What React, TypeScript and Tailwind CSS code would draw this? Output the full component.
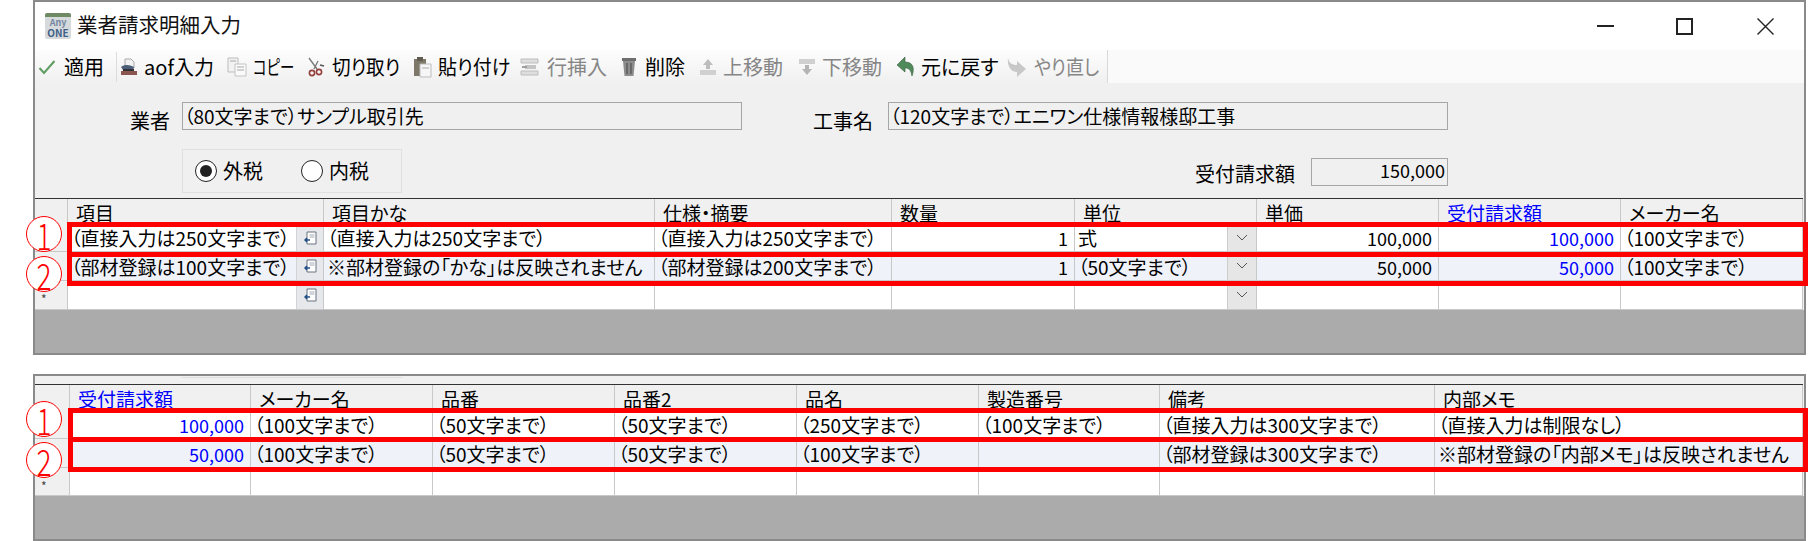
import React from 'react';

const FIRST_COLS = 'grid grid-cols-[33px_256px_331px_237px_183px_182px_182px_182px_182px] grid-rows-[25px_28px_29px_29px]';
const SECOND_COLS = 'grid grid-cols-[35px_181px_182px_182px_182px_182px_181px_275px_368px] grid-rows-[25px_29px_29px_28px]';

const Check = () => (
  <svg width="18" height="16" viewBox="0 0 18 16" fill="none"><path d="M1.5 9l4.5 5L16.5 2" stroke="#5f9c62" strokeWidth="2" /></svg>
);
const Aof = () => (
  <svg width="18" height="20" viewBox="0 0 18 20">
    <path d="M5 2h6l3 3v6H5z" fill="#f2f2f2" stroke="#a8a8a8" />
    <path d="M1 10c4-3 9-2 13 0l-1 3H3z" fill="#4d5f78" />
    <path d="M1 14h16v4H1z" fill="#8a5650" />
    <path d="M3 12h11v2H3z" fill="#2f3136" />
  </svg>
);
const Copy = () => (
  <svg width="20" height="20" viewBox="0 0 20 20">
    <path d="M1 1h10v14H1z" fill="#f2f2f2" stroke="#bcbcbc" />
    <path d="M8 7h11v12H8z" fill="#fafafa" stroke="#c4c4c4" />
    <path d="M3 4h6M10 10h7M10 13h7" stroke="#a8a8a8" />
  </svg>
);
const ScissorsIcon = () => (
  <svg width="20" height="20" viewBox="0 0 20 20" fill="none">
    <path d="M3 1l8 11M12 4l-4 8" stroke="#777" strokeWidth="1.3" />
    <path d="M14 8l4 1" stroke="#555" strokeWidth="1.3" />
    <circle cx="6" cy="16" r="2.6" stroke="#94403d" strokeWidth="1.6" />
    <circle cx="13" cy="15" r="2.6" stroke="#94403d" strokeWidth="1.6" />
  </svg>
);
const Paste = () => (
  <svg width="19" height="22" viewBox="0 0 19 22">
    <path d="M1 3h12v17H1z" fill="#7d7868" />
    <path d="M4 1h6v4H4z" fill="#5f5b4e" />
    <path d="M7 8h11v13H7z" fill="#f6f6f6" stroke="#bdbdbd" />
    <path d="M9 12h7" stroke="#aaa" />
  </svg>
);
const Insert = () => (
  <svg width="20" height="20" viewBox="0 0 20 20">
    <path d="M1 2h17v4H1zM1 14h17v4H1z" fill="#dedede" stroke="#bdbdbd" />
    <path d="M5 8h11v4H5z" fill="#c4c4c4" />
    <path d="M2 10h5" stroke="#a0a0a0" strokeWidth="2" />
  </svg>
);
const Trash = () => (
  <svg width="16" height="21" viewBox="0 0 16 21">
    <path d="M1 2h14v3H1z" fill="#6e6e6e" />
    <path d="M2 5h12l-1.5 15h-9z" fill="#8c8c8c" />
    <path d="M6 7v11M10 7v11" stroke="#5c5c5c" strokeWidth="1.5" />
  </svg>
);
const UpMove = () => (
  <svg width="18" height="18" viewBox="0 0 18 18">
    <path d="M9 1l5 6h-3v4H7V7H4z" fill="#bdbdbd" />
    <path d="M1 12h16v5H1z" fill="#d0d0d0" />
  </svg>
);
const DownMove = () => (
  <svg width="18" height="18" viewBox="0 0 18 18">
    <path d="M1 1h16v5H1z" fill="#d0d0d0" />
    <path d="M7 7h4v4h3l-5 6-5-6h3z" fill="#b4b4b4" />
  </svg>
);
const Undo = () => (
  <svg width="20" height="22" viewBox="0 0 20 22">
    <path d="M9 1L1 9l8 7v-4c4 0 6 2 7 8 3-8 1-14-7-14z" fill="#4f8a5b" stroke="#3a5f45" strokeWidth="0.6" />
  </svg>
);
const Redo = () => (
  <svg width="20" height="22" viewBox="0 0 20 22">
    <path d="M1 2c1 5 4 7 9 7V5l9 8-9 8v-5C4 16 0 10 1 2z" fill="#c8c8c8" />
  </svg>
);
const FileBtnIcon = () => (
  <svg width="13" height="14" viewBox="0 0 13 14">
    <path d="M3 1h9v12H3z" fill="#fff" stroke="#69727e" />
    <path d="M5.5 4h5M5.5 6h5" stroke="#a3aab3" />
    <path d="M1 9h5M3 7L1 9l2 2" stroke="#1f4f86" strokeWidth="1.5" fill="none" />
  </svg>
);

type ToolProps = { icon: React.ReactNode; label: string; disabled?: boolean; className: string; labelClass: string };

const Tool = ({ icon, label, disabled, className, labelClass }: ToolProps) => (
  <div className={`flex items-center shrink-0 ${className}`}>
    {icon}
    <span className={`inline-block origin-left text-[20px] whitespace-nowrap ${labelClass} ${disabled ? 'text-[#868686]' : 'text-black'}`}>{label}</span>
  </div>
);

const Radio = ({ checked, label, className }: { checked?: boolean; label: string; className: string }) => (
  <div className={`flex items-center ${className}`}>
    <div className="w-[22px] h-[22px] rounded-full border-[1.5px] border-[#222] bg-white flex items-center justify-center">
      {checked && <div className="w-[12px] h-[12px] rounded-full bg-[#222]" />}
    </div>
    <span className="ml-[6px] text-[20px]">{label}</span>
  </div>
);

const Head = ({ children, blue }: { children?: React.ReactNode; blue?: boolean }) => (
  <div className={`pt-[3px] pl-[8px] text-[19px] leading-[22px] border-r border-[#c8c8c8] bg-[#f0f0f0] whitespace-nowrap ${blue ? 'text-[#0000ff]' : 'text-black'}`}>
    {children}
  </div>
);

const Cell = ({ children, alt, right, blue, button }: { children?: React.ReactNode; alt?: boolean; right?: boolean; blue?: boolean; button?: 'file' | 'combo' }) => (
  <div className={`flex items-stretch border-r border-b border-[#c8c8c8] whitespace-nowrap ${right ? 'text-[18px]' : 'text-[19px]'} ${alt ? 'bg-[#eff2f8]' : 'bg-white'} ${blue ? 'text-[#0000ff]' : 'text-black'}`}>
    <div className={`flex-1 flex items-center min-w-0 pt-[1px] leading-[22px] ${right ? 'justify-end pr-[6px]' : 'pl-[3px]'}`}>{children}</div>
    {button === 'file' && (
      <div className="w-[27px] shrink-0 flex items-center justify-center bg-[#e6e8ec] border-l border-[#d4d4d4]"><FileBtnIcon /></div>
    )}
    {button === 'combo' && (
      <div className="w-[29px] shrink-0 flex items-center justify-center bg-[#e6e6e6] border-l border-[#cdcdcd]">
        <svg width="12" height="8" viewBox="0 0 12 8" fill="none"><path d="M1 1l5 5 5-5" stroke="#555" /></svg>
      </div>
    )}
  </div>
);

const RowHead = ({ star }: { star?: boolean }) => (
  <div className="pt-[12px] pl-[6px] bg-[#f0f0f0] border-r border-b border-[#c8c8c8] text-[12px] leading-none text-[#444]">
    {star ? '*' : ''}
  </div>
);

const RedBox = ({ className }: { className: string }) => <div className={`absolute border-[5px] border-[#ff0000] ${className}`} />;

const Circled = ({ n, className }: { n: string; className: string }) => (
  <div className={`absolute w-[36px] h-[36px] rounded-full bg-white border border-[#ff0000] flex items-center justify-center text-[#ff0000] text-[28px] leading-none font-light ${className}`}>
    <span className="inline-block scale-y-[1.3]">{n}</span>
  </div>
);

export default function App() {
  return (
    <div className="relative h-[541px] w-[1808px] overflow-hidden bg-white text-black font-['Noto_Sans_CJK_JP',sans-serif] [font-feature-settings:'palt']">
      <div className="ml-[33px] w-[1773px] h-[355px] border-2 border-[#8a8a8a] bg-[#f0f0f0] flex flex-col">
        <div className="h-[48px] shrink-0 bg-white flex items-center pl-[10px]">
          <div className="w-[26px] h-[26px] rounded-[2px] bg-[#d6dadd] flex flex-col items-center overflow-hidden">
            <div className="h-[4px] w-full bg-[#6f8a62] shrink-0" />
            <div className="text-[9px] leading-[10px] font-bold text-[#7487a0] mt-[1px]">Any</div>
            <div className="text-[10px] leading-[10px] font-bold text-[#3f5f86]">ONE</div>
          </div>
          <span className="ml-[6px] -mt-[3px] text-[20.5px] text-[#111]">業者請求明細入力</span>
          <div className="ml-auto flex items-center pr-[30px]">
            <div className="w-[17px] h-[2px] bg-[#222]" />
            <div className="ml-[62px] w-[17px] h-[17px] border-2 border-[#222]" />
            <svg className="ml-[64px]" width="17" height="17" viewBox="0 0 17 17" fill="none"><path d="M0.5 0.5l16 16M16.5 0.5l-16 16" stroke="#222" strokeWidth="1.4" /></svg>
          </div>
        </div>

        <div className="h-[33px] shrink-0 flex">
          <div className="w-[1073px] flex items-center pl-[3px] bg-gradient-to-b from-[#fdfdfd] to-[#f0f0f0] border-r border-[#d8d8d8]">
            <Tool className="gap-[8px]" labelClass="w-[40px]" icon={<Check />} label="適用" />
            <div className="ml-[12px] w-px h-[30px] bg-[#dcdcdc]" />
            <Tool className="ml-[3px] gap-[6px]" labelClass="w-[70px]" icon={<Aof />} label="aof入力" />
            <Tool className="ml-[13px] gap-[6px]" labelClass="w-[41px] scale-x-[0.72]" icon={<Copy />} label="コピー" />
            <Tool className="ml-[12px] gap-[6px]" labelClass="w-[68px] scale-x-[0.93]" icon={<ScissorsIcon />} label="切り取り" />
            <Tool className="ml-[13px] gap-[6px]" labelClass="w-[70px] scale-x-[0.95]" icon={<Paste />} label="貼り付け" />
            <Tool className="ml-[12px] gap-[7px]" labelClass="w-[60px]" icon={<Insert />} label="行挿入" disabled />
            <Tool className="ml-[14px] gap-[8px]" labelClass="w-[40px]" icon={<Trash />} label="削除" />
            <Tool className="ml-[14px] gap-[6px]" labelClass="w-[61px]" icon={<UpMove />} label="上移動" disabled />
            <Tool className="ml-[14px] gap-[6px]" labelClass="w-[60px]" icon={<DownMove />} label="下移動" disabled />
            <Tool className="ml-[14px] gap-[5px]" labelClass="w-[75px]" icon={<Undo />} label="元に戻す" />
            <Tool className="ml-[11px] gap-[7px]" labelClass="w-[64px] scale-x-[0.9]" icon={<Redo />} label="やり直し" disabled />
          </div>
          <div className="flex-1 bg-[#fafafa]" />
        </div>

        <div className="h-[116px] shrink-0 pt-[19px]">
          <div className="flex items-start h-[28px]">
            <span className="ml-[95px] w-[40px] mt-[7px] text-[20px] leading-[24px]">業者</span>
            <div className="ml-[12px] w-[560px] h-[28px] flex items-center pl-[1px] border-[1.5px] border-[#a6a6a6] text-[19px] whitespace-nowrap">（80文字まで）サンプル取引先</div>
            <span className="ml-[71px] w-[60px] mt-[7px] text-[20px] leading-[24px]">工事名</span>
            <div className="ml-[15px] w-[560px] h-[28px] flex items-center pl-[1px] border-[1.5px] border-[#a6a6a6] text-[19px] whitespace-nowrap">（120文字まで）エニワン仕様情報様邸工事</div>
          </div>
          <div className="mt-[19px] flex items-start justify-between pl-[147px] pr-[356px]">
            <div className="w-[220px] h-[44px] flex items-center pl-[12px] border border-[#e0e0e0]">
              <Radio checked label="外税" className="" />
              <Radio label="内税" className="ml-[38px]" />
            </div>
            <div className="mt-[5px] flex items-center">
              <span className="text-[20px] mt-[5px] whitespace-nowrap">受付請求額</span>
              <div className="ml-[16px] w-[137px] h-[28px] flex items-center justify-end pr-[2px] pb-[3px] border-[1.5px] border-[#a6a6a6] text-[18px] leading-[22px]">150,000</div>
            </div>
          </div>
        </div>

        <div className={`${FIRST_COLS} shrink-0 w-[1768px] border-t border-[#333] -mt-[1px]`}>
          <Head />
          <Head>項目</Head>
          <Head>項目かな</Head>
          <Head>仕様・摘要</Head>
          <Head>数量</Head>
          <Head>単位</Head>
          <Head>単価</Head>
          <Head blue>受付請求額</Head>
          <Head>メーカー名</Head>

          <RowHead />
          <Cell button="file">（直接入力は250文字まで）</Cell>
          <Cell>（直接入力は250文字まで）</Cell>
          <Cell>（直接入力は250文字まで）</Cell>
          <Cell right>1</Cell>
          <Cell button="combo">式</Cell>
          <Cell right>100,000</Cell>
          <Cell right blue>100,000</Cell>
          <Cell>（100文字まで）</Cell>

          <RowHead />
          <Cell alt button="file">（部材登録は100文字まで）</Cell>
          <Cell alt>※部材登録の「かな」は反映されません</Cell>
          <Cell alt>（部材登録は200文字まで）</Cell>
          <Cell alt right>1</Cell>
          <Cell alt button="combo">（50文字まで）</Cell>
          <Cell alt right>50,000</Cell>
          <Cell alt right blue>50,000</Cell>
          <Cell alt>（100文字まで）</Cell>

          <RowHead star />
          <Cell button="file" />
          <Cell />
          <Cell />
          <Cell right />
          <Cell button="combo" />
          <Cell right />
          <Cell right blue />
          <Cell />
        </div>
        <div className="flex-1 bg-[#ababab]" />
      </div>

      <div className="mt-[19px] ml-[33px] w-[1773px] h-[167px] border-2 border-[#8a8a8a] bg-[#f0f0f0] flex flex-col">
        <div className="h-[8px] shrink-0">
          <div className="ml-[147px] w-[220px] h-[2px] border-b border-[#e0e0e0]" />
        </div>
        <div className={`${SECOND_COLS} shrink-0 w-[1768px] border-t border-[#333]`}>
          <Head />
          <Head blue>受付請求額</Head>
          <Head>メーカー名</Head>
          <Head>品番</Head>
          <Head>品番2</Head>
          <Head>品名</Head>
          <Head>製造番号</Head>
          <Head>備考</Head>
          <Head>内部メモ</Head>

          <RowHead />
          <Cell right blue>100,000</Cell>
          <Cell>（100文字まで）</Cell>
          <Cell>（50文字まで）</Cell>
          <Cell>（50文字まで）</Cell>
          <Cell>（250文字まで）</Cell>
          <Cell>（100文字まで）</Cell>
          <Cell>（直接入力は300文字まで）</Cell>
          <Cell>（直接入力は制限なし）</Cell>

          <RowHead />
          <Cell alt right blue>50,000</Cell>
          <Cell alt>（100文字まで）</Cell>
          <Cell alt>（50文字まで）</Cell>
          <Cell alt>（50文字まで）</Cell>
          <Cell alt>（100文字まで）</Cell>
          <Cell alt />
          <Cell alt>（部材登録は300文字まで）</Cell>
          <Cell alt>※部材登録の「内部メモ」は反映されません</Cell>

          <RowHead star />
          <Cell right blue />
          <Cell />
          <Cell />
          <Cell />
          <Cell />
          <Cell />
          <Cell />
          <Cell />
        </div>
        <div className="flex-1 bg-[#ababab]" />
      </div>

      <RedBox className="left-[67px] top-[222px] w-[1741px] h-[35px]" />
      <RedBox className="left-[67px] top-[252px] w-[1741px] h-[34px]" />
      <RedBox className="left-[68px] top-[408px] w-[1740px] h-[34px]" />
      <RedBox className="left-[68px] top-[437px] w-[1740px] h-[35px]" />
      <Circled n="1" className="left-[26px] top-[216px]" />
      <Circled n="2" className="left-[26px] top-[256px]" />
      <Circled n="1" className="left-[26px] top-[401px]" />
      <Circled n="2" className="left-[26px] top-[442px]" />
    </div>
  );
}
